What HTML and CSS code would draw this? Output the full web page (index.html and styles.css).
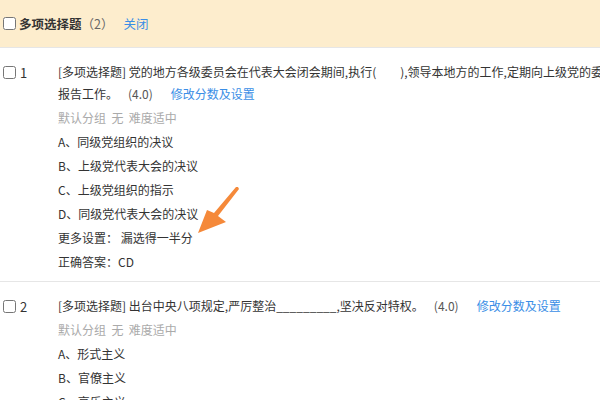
FILE: index.html
```html
<!DOCTYPE html>
<html>
	<head>
		<meta charset="utf-8" lang="zh" />
		<title>多项选择题</title>
		<link rel="stylesheet" href="styles.css">
	</head>

	<body>
		<div id="paper">
			<div class="group-head">
				<label class="check"><input type="checkbox"><b>多项选择题</b></label>
				<span class="count">（2）</span>
				<a class="link" href="#">关闭</a>
			</div>

			<div class="question">
				<label class="num"><input type="checkbox"><span>1</span></label>
				<div class="body">
					<p class="stem">[多项选择题] 党的地方各级委员会在代表大会闭会期间,执行(　　),领导本地方的工作,定期向上级党的委员会报告工作。<span class="score">(4.0)</span><a class="link" href="#">修改分数及设置</a></p>
					<p class="meta">默认分组&nbsp;&nbsp;无&nbsp;&nbsp;难度适中</p>
					<p>A、同级党组织的决议</p>
					<p>B、上级党代表大会的决议</p>
					<p>C、上级党组织的指示</p>
					<p>D、同级党代表大会的决议</p>
					<p>更多设置：&nbsp;漏选得一半分</p>
					<p>正确答案：CD</p>
				</div>
			</div>

			<div class="question">
				<label class="num"><input type="checkbox"><span>2</span></label>
				<div class="body">
					<p class="stem">[多项选择题] 出台中央八项规定,严厉整治_________,坚决反对特权。<span class="score">(4.0)</span><a class="link" href="#">修改分数及设置</a></p>
					<p class="meta">默认分组&nbsp;&nbsp;无&nbsp;&nbsp;难度适中</p>
					<p>A、形式主义</p>
					<p>B、官僚主义</p>
					<p>C、享乐主义</p>
					<p>D、奢靡之风</p>
				</div>
			</div>
		</div>

		<!-- callout arrow -->
		<svg class="arrow" width="600" height="400" viewBox="0 0 600 400">
			<polygon points="238,187 239,189 218,216 226,222 198,233 207,210 214,213 236,187" fill="#f5893a" />
		</svg>
	</body>
</html>
```

FILE: styles.css
```css
body {
	color: #333;
	font-family: "Microsoft YaHei", "Noto Sans CJK SC", "Liberation Sans", sans-serif;
	font-size: 12px;
	margin: 0;
	overflow: hidden;
	padding: 0;
	position: relative;
}
p { margin: 0; }
a { text-decoration: none; }
input[type="checkbox"] {
	height: 13px;
	margin: 0;
	width: 13px;
}

#paper { width: 630px; }

.link { color: #3a8ee6; }

/* Group header */
.group-head {
	align-items: center;
	background: #fdedcd;
	border-bottom: 1px solid #e6e6e6;
	display: flex;
	font-size: 12.5px;
	height: 47px;
	padding: 0 0 0 3px;
}
.group-head .check {
	align-items: center;
	display: flex;
	gap: 3px;
}
.group-head b { font-weight: bold; }
.group-head .count {
	color: #666;
	margin: 0 10px 0 0;
}

/* Questions */
.question {
	border-bottom: 1px solid #e6e6e6;
	display: flex;
	padding: 13px 0 7px 3px;
}
.num {
	align-items: center;
	display: flex;
	font-size: 13px;
	gap: 4px;
	height: 22px;
	width: 55px;
}
.body { flex: 1; }
.body p { line-height: 24px; }
.body .stem {
	line-height: 22px;
	margin-bottom: 1px;
}
.score {
	color: #555;
	margin: 0 18px 0 10px;
}
.body .meta { color: #aaa; }

.arrow {
	left: 0;
	pointer-events: none;
	position: absolute;
	top: 0;
}
```
